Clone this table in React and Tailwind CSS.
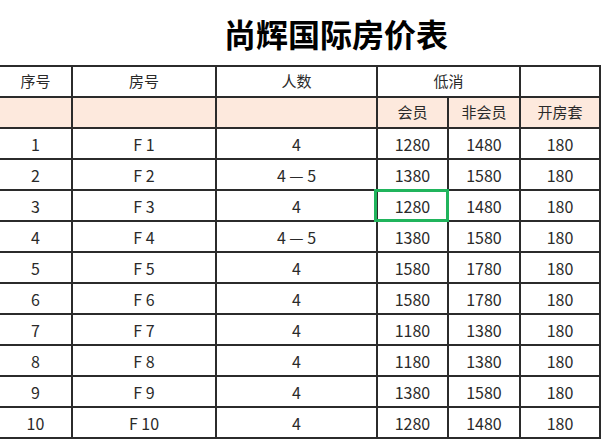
import React from "react";

const rows = [
  ["1", "F 1", "4", "1280", "1480", "180"],
  ["2", "F 2", "4 — 5", "1380", "1580", "180"],
  ["3", "F 3", "4", "1280", "1480", "180"],
  ["4", "F 4", "4 — 5", "1380", "1580", "180"],
  ["5", "F 5", "4", "1580", "1780", "180"],
  ["6", "F 6", "4", "1580", "1780", "180"],
  ["7", "F 7", "4", "1180", "1380", "180"],
  ["8", "F 8", "4", "1180", "1380", "180"],
  ["9", "F 9", "4", "1380", "1580", "180"],
  ["10", "F 10", "4", "1280", "1480", "180"],
];

const font = { fontFamily: '"Noto Sans CJK SC", "Noto Sans", sans-serif' };

function Cell({ children, className = "" }) {
  return (
    <div className={`h-[29px] flex items-center justify-center text-[#2a2a2a] whitespace-pre ${className}`}>
      {children}
    </div>
  );
}

export default function App() {
  return (
    <div className="w-[601px] h-[441px] bg-white overflow-hidden" style={font}>
      <div className="h-[65px] flex items-center pl-[71px]">
        <h1 className="flex-1 text-center text-[32px] font-bold text-black leading-none">尚辉国际房价表</h1>
      </div>

      <div className="grid grid-cols-[71px_142px_159px_69px_70px_78px] gap-[2px] bg-[#2b2b2b] pt-[2px] pr-[2px] pb-[2px]">
        {/* header */}
        <Cell className="bg-white text-[15px]">序号</Cell>
        <Cell className="bg-white text-[15px]">房号</Cell>
        <Cell className="bg-white text-[15px]">人数</Cell>
        <Cell className="bg-white text-[15px] col-span-2">低消</Cell>
        <Cell className="bg-white" />

        <Cell className="bg-[#fde9dd]" />
        <Cell className="bg-[#fde9dd]" />
        <Cell className="bg-[#fde9dd]" />
        <Cell className="bg-[#fde9dd] text-[15px]">会员</Cell>
        <Cell className="bg-[#fde9dd] text-[15px]">非会员</Cell>
        <Cell className="bg-[#fde9dd] text-[15px]">开房套</Cell>

        {rows.map((r, i) =>
          r.map((v, j) => (
            <Cell key={`${i}-${j}`} className="bg-white text-[16px] relative">
              {v}
              {i === 2 && j === 3 && (
                <div className="absolute z-10 -top-[2px] -bottom-[2px] -left-[4px] -right-[2px] border-[3px] border-[#20b45c]" />
              )}
            </Cell>
          ))
        )}
      </div>
    </div>
  );
}
